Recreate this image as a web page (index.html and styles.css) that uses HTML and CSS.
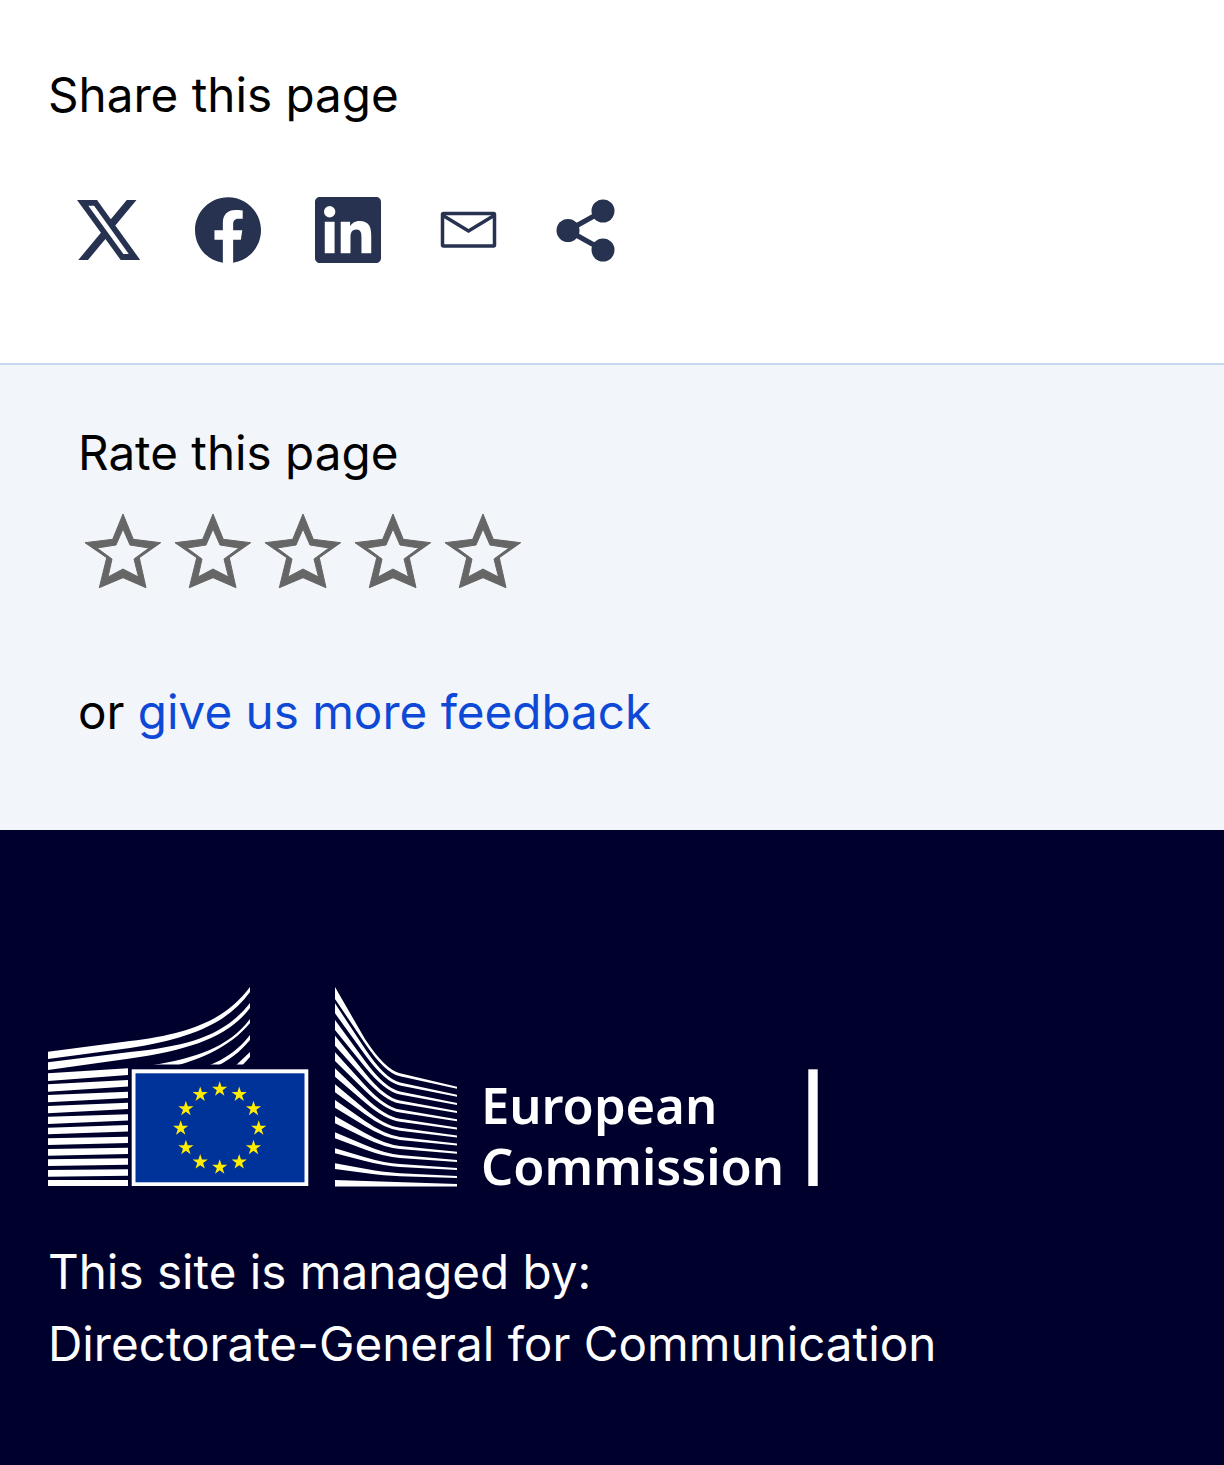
FILE: index.html
```html
<!DOCTYPE html>
<html lang="en">
<head>
  <meta charset="UTF-8">
  <meta name="viewport" content="width=device-width, initial-scale=1.0">
  <title>Share and rate this page</title>
  <link rel="stylesheet" href="styles.css">
</head>
<body>
  <section class="share">
    <p class="share-title">Share this page</p>
    <div class="share-icons">
      <a href="#" class="share-item" aria-label="X">
        <svg class="icon-x" viewBox="1.25 2.25 21.5 19.5" preserveAspectRatio="none"><path d="M18.244 2.25h3.308l-7.227 8.26 8.502 11.24H16.17l-5.214-6.817L4.99 21.75H1.68l7.73-8.835L1.254 2.25H8.08l4.713 6.231zm-1.161 17.52h1.833L7.084 4.126H5.117z"/></svg>
      </a>
      <a href="#" class="share-item" aria-label="Facebook">
        <svg class="icon" viewBox="0 0 24 24"><path d="M24 12.073c0-6.627-5.373-12-12-12s-12 5.373-12 12c0 5.99 4.388 10.954 10.125 11.854v-8.385H7.078v-3.47h3.047V9.43c0-3.007 1.792-4.669 4.533-4.669 1.312 0 2.686.235 2.686.235v2.953H15.83c-1.491 0-1.956.925-1.956 1.874v2.25h3.328l-.532 3.47h-2.796v8.385C19.612 23.027 24 18.062 24 12.073z"/></svg>
      </a>
      <a href="#" class="share-item" aria-label="LinkedIn">
        <svg class="icon" viewBox="0 0 24 24"><path d="M20.447 20.452h-3.554v-5.569c0-1.328-.027-3.037-1.852-3.037-1.853 0-2.136 1.445-2.136 2.939v5.667H9.351V9h3.414v1.561h.046c.477-.9 1.637-1.85 3.37-1.85 3.601 0 4.267 2.37 4.267 5.455v6.286zM5.337 7.433a2.062 2.062 0 0 1-2.063-2.065 2.064 2.064 0 1 1 2.063 2.065zm1.782 13.019H3.555V9h3.564v11.452zM22.225 0H1.771C.792 0 0 .774 0 1.729v20.542C0 23.227.792 24 1.771 24h20.451C23.2 24 24 23.227 24 22.271V1.729C24 .774 23.2 0 22.222 0h.003z"/></svg>
      </a>
      <a href="#" class="share-item" aria-label="Email">
        <svg class="icon" viewBox="0 0 66 66"><rect class="mail-line" x="7.5" y="16.5" width="52" height="32.5" rx="1"/><polyline class="mail-line" points="8,18.5 33.5,34 59,18.5"/></svg>
      </a>
      <a href="#" class="share-item" aria-label="More">
        <svg class="icon" viewBox="0 0 66 66"><line class="share-line" x1="13" y1="33.5" x2="48" y2="14"/><line class="share-line" x1="13" y1="33.5" x2="48" y2="53"/><circle cx="13" cy="33.5" r="11.5"/><circle cx="48" cy="14" r="11.5"/><circle cx="48" cy="53" r="11.5"/></svg>
      </a>
    </div>
  </section>

  <section class="rate">
    <p class="rate-title">Rate this page</p>
    <div class="stars">
      <svg class="star" viewBox="0 0 90 80"><path fill-rule="evenodd" d="M45 3L55.3 28.3 82.7 31.7 61.3 46.7 68 76.7 45 66.7 21.3 76.7 28.7 46.7 7 31.7 34.7 28.3ZM45 18L38 34 19 37 34 48 30 66 45 58 60.5 66 56 48 71 37 52 34Z"/></svg>
      <svg class="star" viewBox="0 0 90 80"><path fill-rule="evenodd" d="M45 3L55.3 28.3 82.7 31.7 61.3 46.7 68 76.7 45 66.7 21.3 76.7 28.7 46.7 7 31.7 34.7 28.3ZM45 18L38 34 19 37 34 48 30 66 45 58 60.5 66 56 48 71 37 52 34Z"/></svg>
      <svg class="star" viewBox="0 0 90 80"><path fill-rule="evenodd" d="M45 3L55.3 28.3 82.7 31.7 61.3 46.7 68 76.7 45 66.7 21.3 76.7 28.7 46.7 7 31.7 34.7 28.3ZM45 18L38 34 19 37 34 48 30 66 45 58 60.5 66 56 48 71 37 52 34Z"/></svg>
      <svg class="star" viewBox="0 0 90 80"><path fill-rule="evenodd" d="M45 3L55.3 28.3 82.7 31.7 61.3 46.7 68 76.7 45 66.7 21.3 76.7 28.7 46.7 7 31.7 34.7 28.3ZM45 18L38 34 19 37 34 48 30 66 45 58 60.5 66 56 48 71 37 52 34Z"/></svg>
      <svg class="star" viewBox="0 0 90 80"><path fill-rule="evenodd" d="M45 3L55.3 28.3 82.7 31.7 61.3 46.7 68 76.7 45 66.7 21.3 76.7 28.7 46.7 7 31.7 34.7 28.3ZM45 18L38 34 19 37 34 48 30 66 45 58 60.5 66 56 48 71 37 52 34Z"/></svg>
    </div>
    <p class="rate-more">or <a href="#">give us more feedback</a></p>
  </section>

  <footer class="footer">
    <svg class="logo" viewBox="48 985 772 220" role="img" aria-label="European Commission">
      <defs>
        <path id="eu-star" d="M0-8L1.8-2.5H7.6L2.9.95 4.7 6.5 0 3.07-4.7 6.5-2.9.95-7.6-2.5H-1.8Z"/>
      </defs>

      <!-- left wing -->
      <g class="logo-white">
        <path d="M48 1051.7L130 1041C190 1034 225 1020 250 987V992C228 1023 190 1039 130 1048L48 1059Z"/>
        <path d="M48 1062.3L130 1052C190 1046 225 1035 250 1003V1008C228 1037 190 1050 130 1058.5L48 1070Z"/>
        <path d="M48 1073.3L128 1068.3 153 1065C195 1058 228 1048 250 1019V1023C230 1048 195 1062 160 1070L128 1075 48 1081Z"/>
        <path d="M200 1069C225 1060 238 1050 250 1035V1040C240 1052 230 1060 210 1070Z"/>
        <path d="M232 1069L250 1052V1057L238 1070Z"/>
        <path d="M48 1084.3L128 1080V1086.5L48 1091.7Z"/>
        <path d="M48 1095L128 1091.7V1098L48 1102.3Z"/>
        <path d="M48 1106L128 1102.7V1109L48 1113.3Z"/>
        <path d="M48 1116.7L128 1114.3V1120.5L48 1124Z"/>
        <path d="M48 1127.7L128 1125V1131.5L48 1134.3Z"/>
        <path d="M48 1138.3L128 1136.7V1143L48 1145Z"/>
        <path d="M48 1149L128 1147.7V1154L48 1155.7Z"/>
        <path d="M48 1159.3L128 1158.3V1164.7L48 1166Z"/>
        <path d="M48 1170L128 1169.3V1175.7L48 1176.7Z"/>
        <path d="M48 1180H128V1186H48Z"/>
      </g>

      <!-- flag -->
      <rect class="logo-mask" x="128" y="1064.5" width="182" height="123"/>
      <rect class="logo-white" x="131.7" y="1069.3" width="176.6" height="116.7"/>
      <rect class="logo-blue" x="135.5" y="1073.3" width="169" height="109"/>
      <g class="logo-yellow">
        <use href="#eu-star" x="219.7" y="1089.3"/>
        <use href="#eu-star" x="239.2" y="1094.5"/>
        <use href="#eu-star" x="253.5" y="1108.8"/>
        <use href="#eu-star" x="258.7" y="1128.3"/>
        <use href="#eu-star" x="253.5" y="1147.8"/>
        <use href="#eu-star" x="239.2" y="1162.1"/>
        <use href="#eu-star" x="219.7" y="1167.3"/>
        <use href="#eu-star" x="200.2" y="1162.1"/>
        <use href="#eu-star" x="185.9" y="1147.8"/>
        <use href="#eu-star" x="180.7" y="1128.3"/>
        <use href="#eu-star" x="185.9" y="1108.8"/>
        <use href="#eu-star" x="200.2" y="1094.5"/>
      </g>

      <!-- right wing -->
      <g class="logo-white">
        <path d="M335 987L365 1039.1Q385 1069.8 400 1073.3L457 1086.7V1088.7L400 1076.3Q385 1073 365 1043.4L335 999Z"/>
        <path d="M335 1003.3L365 1048.8Q385 1079.1 400 1082.4L457 1094.8V1096.8L400 1085.4Q385 1082.4 365 1054.8L335 1013.3Z"/>
        <path d="M335 1020L365 1061.1Q385 1088.5 400 1091.5L457 1103V1105L400 1094.5Q385 1091.7 365 1067L335 1030Z"/>
        <path d="M335 1035.7L365 1072.9Q385 1097.7 400 1100.5L457 1111.1V1113.1L400 1103.5Q385 1101 365 1078.9L335 1045.7Z"/>
        <path d="M335 1052.3L365 1085.2Q385 1107.1 400 1109.6L457 1119.2V1121.2L400 1112.6Q385 1110.3 365 1090.6L335 1061Z"/>
        <path d="M335 1068.3L365 1097.2Q385 1116.4 400 1118.7L457 1127.4V1129.4L400 1121.7Q385 1119.7 365 1102.5L335 1076.7Z"/>
        <path d="M335 1084.3L365 1109.2Q385 1125.8 400 1127.8L457 1135.5V1137.5L400 1130.8Q385 1129 365 1114.3L335 1092.3Z"/>
        <path d="M335 1100L365 1121.1Q385 1135.1 400 1136.9L457 1143.6V1145.6L400 1139.9Q385 1138.4 365 1126.1L335 1107.7Z"/>
        <path d="M335 1116L365 1133.1Q385 1144.5 400 1146L457 1151.7V1153.7L400 1149Q385 1147.8 365 1138L335 1123.3Z"/>
        <path d="M335 1132.3L365 1145.1Q385 1153.7 400 1155L457 1159.9V1161.9L400 1158Q385 1157 365 1149.5L335 1138.3Z"/>
        <path d="M335 1148.3L365 1157.2Q385 1163.1 400 1164.1L457 1168V1170L400 1167.1Q385 1166.3 365 1161.1L335 1153.3Z"/>
        <path d="M335 1163.3L365 1168.8Q385 1172.4 400 1173.2L457 1176.1V1178.1L400 1176.2Q385 1175.7 365 1173L335 1169Z"/>
        <path d="M335 1180L457 1184V1186.5H335Z"/>
      </g>

      <text class="logo-text" x="481" y="1123.5">European</text>
      <text class="logo-text" x="481" y="1185">Commission</text>
      <rect class="logo-white" x="808.3" y="1069.3" width="9.4" height="116.7"/>
    </svg>
    <p class="footer-text">This site is managed by:</p>
    <p class="footer-text">Directorate-General for Communication</p>
  </footer>
</body>
</html>
```

FILE: styles.css
```css
body {
  margin: 0;
  font-family: Inter, 'Liberation Sans', sans-serif;
  font-size: 47.6px;
  line-height: 72px;
  color: #000;
  background: #fff;
}

p {
  margin: 0;
}

.share {
  padding: 59px 48px 100px;
  border-bottom: 2px solid #c8d5ee;
}

.share-icons {
  display: flex;
  margin-top: 66px;
}

.share-item {
  display: flex;
  justify-content: center;
  align-items: center;
  width: 120px;
  height: 66px;
  fill: #26324f;
}

.icon {
  width: 66px;
  height: 66px;
}

.icon-x {
  width: 63px;
  height: 60px;
}

.mail-line {
  fill: none;
  stroke: #26324f;
  stroke-width: 3.5;
}

.share-line {
  stroke: #26324f;
  stroke-width: 5;
}

.rate {
  padding: 52px 78px 82px;
  background: #f2f5f9;
}

.stars {
  display: flex;
  margin-top: 22px;
}

.star {
  width: 90px;
  height: 80px;
  fill: #666;
  stroke: #666;
}

.rate-more {
  margin-top: 85px;
}

.rate-more a {
  color: #0d49d6;
  text-decoration: none;
}

.footer {
  padding: 155px 48px 86px;
  background: #00002d;
  color: #fff;
}

.logo {
  display: block;
  width: 772px;
  height: 220px;
  margin-bottom: 31px;
}

.logo-white {
  fill: #fff;
}

.logo-mask {
  fill: #00002d;
}

.logo-blue {
  fill: #003399;
}

.logo-yellow {
  fill: #ffed00;
}

.logo-text {
  font-family: 'Noto Sans', sans-serif;
  font-size: 50.7px;
  font-weight: 600;
  fill: #fff;
}
```
